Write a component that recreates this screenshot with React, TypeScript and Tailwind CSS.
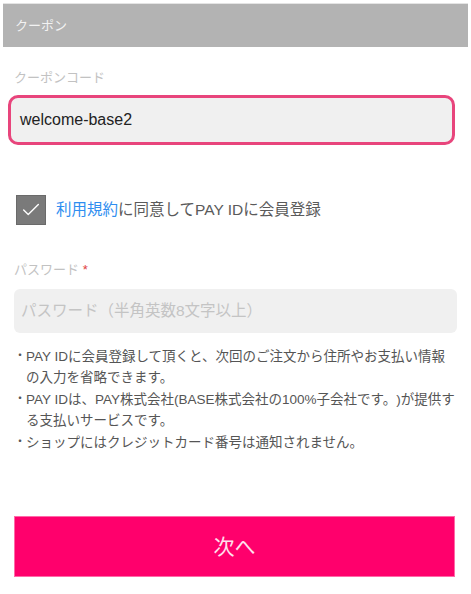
import { Check } from "lucide-react";

const notes = [
  "PAY IDに会員登録して頂くと、次回のご注文から住所やお支払い情報の入力を省略できます。",
  "PAY IDは、PAY株式会社(BASE株式会社の100%子会社です。)が提供する支払いサービスです。",
  "ショップにはクレジットカード番号は通知されません。",
];

export default function App() {
  return (
    <div
      className="min-h-[594px] w-[471px] bg-white [text-spacing-trim:space-all]"
      style={{ fontFamily: '"Liberation Sans", "Noto Sans CJK JP", sans-serif' }}
    >
      <div className="px-[3px] pt-[3px]">
        <div className="flex h-[44px] items-center border-t border-[#e4e4e4] bg-[#b3b3b3] px-[12px] text-[13px] text-[#f2f2f2]">
          クーポン
        </div>
      </div>

      <div className="px-[14px]">
        <div className="mt-[22px] text-[13px] leading-[18px] text-[#c2c2c2]">クーポンコード</div>
        <div className="-ml-[6px] mt-[8px] w-[447px] rounded-[10px] border-[3px] border-[#e8457c] bg-[#f0f0f0] px-[9px] py-[11px] text-[16px] leading-[22px] text-[#222]">
          welcome-base2
        </div>

        <label className="mt-[50px] flex items-center gap-[10px]">
          <span className="ml-[2px] flex h-[30px] w-[30px] items-center justify-center border border-[#6a6a6a] bg-[#7a7a7a]">
            <Check className="h-[22px] w-[22px] text-white" strokeWidth={1.5} />
          </span>
          <span className="text-[15.5px] text-[#5a5a5a]">
            <span className="text-[#2f8ef0]">利用規約</span>に同意してPAY IDに会員登録
          </span>
        </label>

        <div className="mt-[36px] text-[13px] leading-[18px] text-[#c2c2c2]">
          パスワード <span className="text-[#e04040]">*</span>
        </div>
        <div className="mt-[10px] flex h-[44px] items-center rounded-[6px] bg-[#f0f0f0] px-[7px] text-[15.5px] text-[#c4c4c4]">
          パスワード（半角英数8文字以上）
        </div>

        <ul className="mt-[13px] space-y-[1px] text-[13.5px] leading-[21px] text-[#555]">
          {notes.map((n) => (
            <li key={n} className="flex">
              <span className="w-[12px] shrink-0 text-[12px]">・</span>
              <span>{n}</span>
            </li>
          ))}
        </ul>

        <button
          type="button"
          className="mt-[63px] flex h-[61px] w-[441px] items-center justify-center border border-[#ff6aa8] bg-[#ff006c] text-[21px] text-[#ffe0ee]"
        >
          次へ
        </button>
      </div>
    </div>
  );
}
